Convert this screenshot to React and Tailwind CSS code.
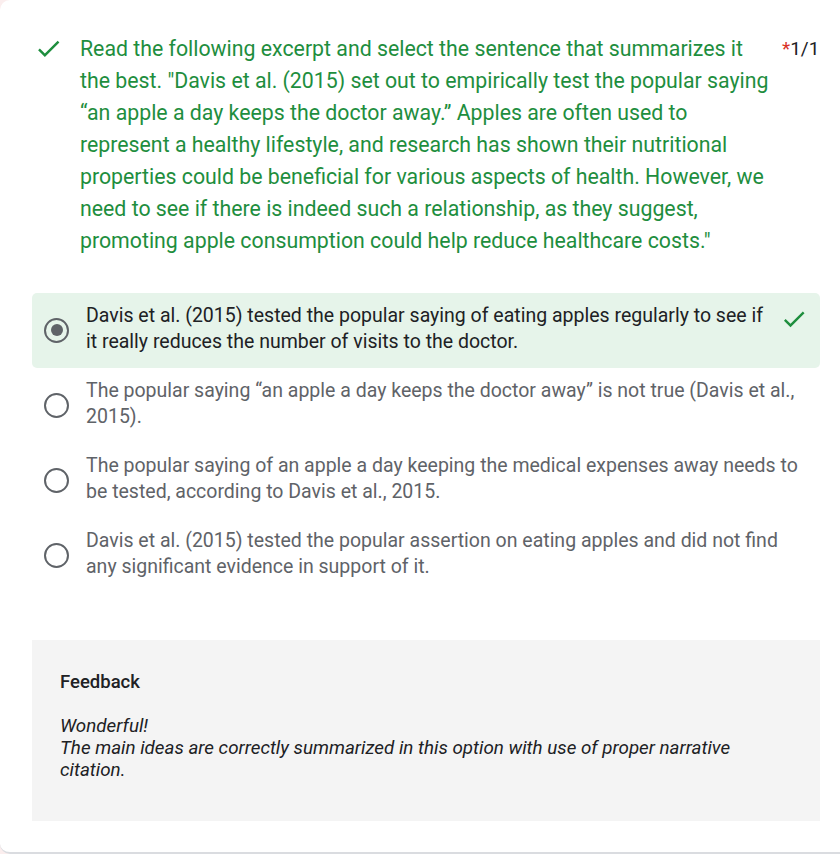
import React from 'react';

const options = [
  {
    text: 'Davis et al. (2015) tested the popular saying of eating apples regularly to see if it really reduces the number of visits to the doctor.',
    selected: true,
  },
  {
    text: 'The popular saying “an apple a day keeps the doctor away” is not true (Davis et al., 2015).',
  },
  {
    text: 'The popular saying of an apple a day keeping the medical expenses away needs to be tested, according to Davis et al., 2015.',
  },
  {
    text: 'Davis et al. (2015) tested the popular assertion on eating apples and did not find any significant evidence in support of it.',
  },
];

const Check = ({ className }) => (
  <svg viewBox="0 0 24 24" className={className} fill="currentColor">
    <path d="M9 16.17 4.83 12l-1.42 1.41L9 19 21 7l-1.41-1.41z" />
  </svg>
);

const Radio = ({ checked }) => (
  <div className="w-[25px] h-[25px] shrink-0 rounded-full border-[2px] border-[#5f6368] flex items-center justify-center">
    {checked && <div className="w-[12px] h-[12px] rounded-full bg-[#5f6368]" />}
  </div>
);

export default function App() {
  return (
    <div className="w-[840px] h-[854px] overflow-hidden bg-[#fbeeee]" style={{ fontFamily: 'Roboto, "Liberation Sans", sans-serif' }}>
      <div className="w-[880px] h-[854px] bg-white rounded-l-[10px] border-b-[2px] border-[#dadce0] pt-[33px] pr-[60px]">
        {/* Question */}
        <div className="flex pl-[34px]">
          <Check className="w-[29px] h-[29px] text-[#1e8e3e] mt-[1px] shrink-0" />
          <div className="ml-[17px] w-[694px] text-[21.3px] leading-[32px] text-[#1e8e3e]">
            Read the following excerpt and select the sentence that summarizes it the best. "Davis et al. (2015) set out to empirically test the popular saying “an apple a day keeps the doctor away.” Apples are often used to represent a healthy lifestyle, and research has shown their nutritional properties could be beneficial for various aspects of health. However, we need to see if there is indeed such a relationship, as they suggest, promoting apple consumption could help reduce healthcare costs."
          </div>
          <div className="ml-[8px] text-[19px] leading-[32px] text-[#202124] whitespace-nowrap">
            <span className="text-[#d93025]">*</span>1/1
          </div>
        </div>

        {/* Options */}
        <div className="mt-[36px] ml-[32px] w-[788px] flex flex-col">
          {options.map((o, i) => (
            <div
              key={i}
              className={`flex items-center h-[75px] pl-[12px] pr-[12px] rounded-[5px] ${o.selected ? 'bg-[#e6f4ea]' : ''}`}
            >
              <div className="-mt-[1px]">
                <Radio checked={o.selected} />
              </div>
              <div className={`ml-[17px] -mt-[3px] flex-1 text-[19.5px] leading-[26px] ${o.selected ? 'text-[#202124]' : 'text-[#5f6368]'}`}>
                {o.text}
              </div>
              {o.selected ? (
                <Check className="w-[28px] h-[28px] text-[#1e8e3e] ml-[12px] -mt-[24px] shrink-0" />
              ) : null}
            </div>
          ))}
        </div>

        {/* Feedback */}
        <div className="mt-[47px] ml-[32px] w-[788px] h-[181px] bg-[#f4f4f4] pl-[28px] pt-[31px]">
          <div className="text-[18.5px] leading-[22px] font-medium text-[#202124]">Feedback</div>
          <div className="mt-[22px] italic text-[18.8px] leading-[22px] text-[#202124] w-[700px]">
            Wonderful!
            <br />
            The main ideas are correctly summarized in this option with use of proper narrative citation.
          </div>
        </div>
      </div>
    </div>
  );
}
